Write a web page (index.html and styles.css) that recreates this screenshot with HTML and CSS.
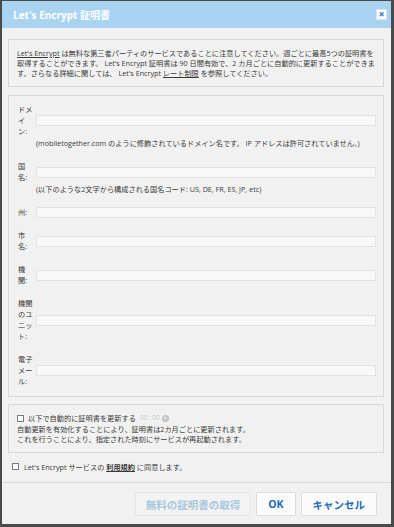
FILE: index.html
```html
<!DOCTYPE html>
<html lang="ja">

<head>
    <meta charset="UTF-8">
    <title>Let's Encrypt 証明書</title>
    <link rel="stylesheet" href="styles.css">
</head>

<body>
    <div class="dialog">
        <div class="titlebar">
            <span class="title">Let's Encrypt 証明書</span>
            <span class="close">&times;</span>
        </div>

        <div class="content">
            <!-- Notice -->
            <div class="panel info">
                <a href="#">Let's Encrypt</a> は無料な第三者パーティのサービスであることに注意してください。週ごとに最高5つの証明書を<br>
                取得することができます。 Let's Encrypt 証明書は 90 日間有効で、2 カ月ごとに自動的に更新することができま<br>
                す。さらなる詳細に関しては、 Let's Encrypt <a href="#">レート制限</a> を参照してください。
            </div>

            <!-- Certificate fields -->
            <div class="panel form">
                <div class="field first">
                    <label>ドメイン:</label>
                    <input type="text">
                </div>
                <p class="hint">(mobiletogether.com のように修飾されているドメイン名です。 IP アドレスは許可されていません。)</p>

                <div class="field">
                    <label>国名:</label>
                    <input type="text">
                </div>
                <p class="hint">(以下のような2文字から構成される国名コード: US, DE, FR, ES, JP, etc)</p>

                <div class="field">
                    <label>州:</label>
                    <input type="text">
                </div>
                <div class="field">
                    <label>市名:</label>
                    <input type="text">
                </div>
                <div class="field">
                    <label>機関:</label>
                    <input type="text">
                </div>
                <div class="field">
                    <label>機関のユニット:</label>
                    <input type="text">
                </div>
                <div class="field">
                    <label>電子メール:</label>
                    <input type="text">
                </div>
            </div>

            <!-- Auto renew -->
            <div class="panel renew">
                <div class="check-line">
                    <input type="checkbox">
                    <span>以下で自動的に証明書を更新する</span>
                    <span class="time">00 : 00</span>
                    <span class="time-icon">&times;</span>
                </div>
                <div>自動更新を有効化することにより、証明書は2カ月ごとに更新されます。</div>
                <div>これを行うことにより、指定された時刻にサービスが再起動されます。</div>
            </div>

            <div class="check-line agree">
                <input type="checkbox">
                <span>Let's Encrypt サービスの <a href="#" class="terms">利用規約</a> に同意します。</span>
            </div>
        </div>

        <div class="footer">
            <button class="btn" disabled>無料の証明書の取得</button>
            <button class="btn">OK</button>
            <button class="btn">キャンセル</button>
        </div>
    </div>
</body>

</html>
```

FILE: styles.css
```css
* {
    box-sizing: border-box;
}

body {
    margin: 0;
    background-color: #4a4a4a;
    font-family: "Open Sans", "Noto Sans CJK JP", sans-serif;
    font-size: 7.2px;
    color: #3a3a3a;
}

.dialog {
    display: flex;
    flex-direction: column;
    height: 527px;
    border-style: solid;
    border-color: #4a4a4a;
    border-width: 1px 3px 3px 2px;
    background-color: #f1f1f1;
}

.titlebar {
    display: flex;
    align-items: center;
    justify-content: space-between;
    height: 27px;
    padding: 0 4px 0 11px;
    background-color: #a8d4f2;
}

.title {
    color: white;
    font-weight: bold;
    font-size: 10px;
}

.close {
    width: 11px;
    height: 11px;
    line-height: 9px;
    text-align: center;
    background-color: #fafcfe;
    border: 1px solid #d7e6f2;
    color: #2d6fae;
    font-weight: bold;
    font-size: 10px;
}

.content {
    padding: 11px 7px 0 6px;
}

.panel {
    border: 1px solid #d8d8d8;
    background-color: #f1f1f1;
}

.panel a {
    color: #3a3a3a;
}

.info {
    padding: 8px 8px;
    line-height: 10px;
    white-space: nowrap;
}

.form {
    margin-top: 8px;
    padding: 8px 7px 9px 9px;
}

.field {
    display: flex;
    align-items: center;
    margin-top: 12px;
}

.field.first {
    margin-top: 0;
}

.field label {
    width: 15.5px;
    margin-right: 2.5px;
    line-height: 11px;
    flex-shrink: 0;
}

.field input {
    flex: 1;
    height: 11px;
    padding: 0;
    border: 1px solid #e3e3e3;
    background-color: #f8f8f8;
}

.hint {
    margin: 1px 0 0 18px;
    line-height: 11px;
    white-space: nowrap;
}

.renew {
    margin-top: 7px;
    padding: 8px 8px 7px 8px;
    line-height: 10.5px;
}

.check-line {
    display: flex;
    align-items: center;
}

.check-line input {
    appearance: none;
    width: 7px;
    height: 7px;
    margin: 0 4px 0 0;
    border: 1px solid #7a7a7a;
    background-color: white;
}

.time {
    margin-left: 4px;
    color: #c9c9c9;
    font-size: 6.5px;
}

.time-icon {
    width: 7px;
    height: 7px;
    margin-left: 2px;
    border-radius: 50%;
    background-color: #c4c4c4;
    color: white;
    font-size: 6px;
    line-height: 7px;
    text-align: center;
}

.agree {
    margin: 9px 0 0 4px;
    line-height: 10.5px;
}

.agree input {
    margin-right: 5px;
}

.terms {
    color: #3a3a3a;
    font-weight: bold;
}

.footer {
    display: flex;
    justify-content: flex-end;
    gap: 5px;
    margin-top: auto;
    padding: 9px 14px 8px 0;
    border-top: 1px solid #dadada;
}

.btn {
    height: 24px;
    padding: 0 11px;
    border: 1px solid #dcdcdc;
    border-radius: 1px;
    background-color: #fbfbfb;
    color: #1c6db3;
    font-family: "Open Sans", "Noto Sans CJK JP", sans-serif;
    font-weight: bold;
    font-size: 10.5px;
}

.btn:disabled {
    padding: 0 10px;
    background-color: #f3f3f3;
    border-color: #e6e6e6;
    color: #a8c8de;
}
```
